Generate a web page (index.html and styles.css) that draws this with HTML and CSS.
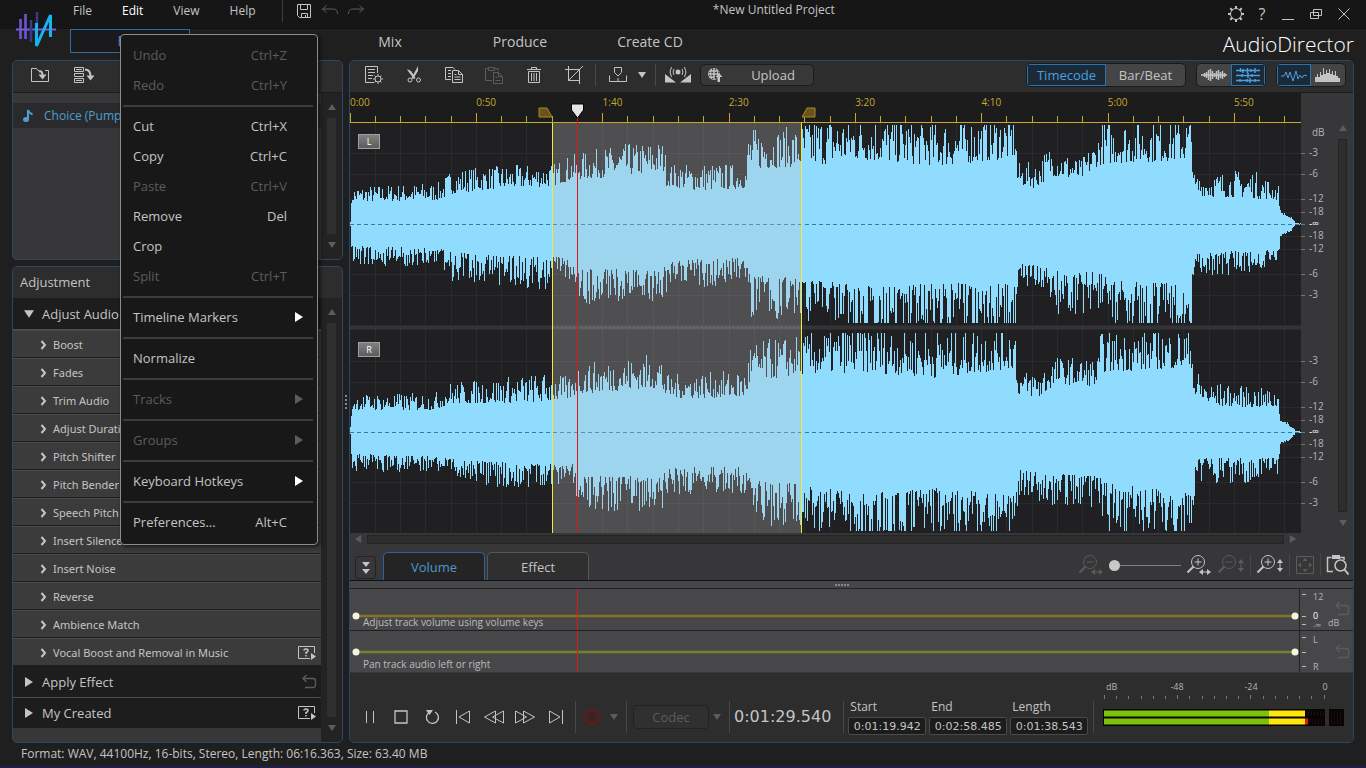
FILE: index.html
```html
<!DOCTYPE html>
<html lang="en">

<head>
    <meta charset="UTF-8">
    <meta name="viewport" content="width=device-width, initial-scale=1.0">
    <title>AudioDirector</title>
    <link rel="stylesheet" href="styles.css">
</head>

<body>
    <!-- Icon sprite -->
    <svg class="sprite" aria-hidden="true">
        <symbol id="i-save" viewBox="0 0 16 16"><path d="M1.500 1.500h13v13h-11l-2-2zM4.500 1.500v5h7v-5M5.500 14.500v-4h6v4M9.500 12v2"/></symbol>
        <symbol id="i-undo" viewBox="0 0 16 16"><path d="M4.500 2.500L.5 6l4 3.500M.5 6h11q4 0 4 5"/></symbol>
        <symbol id="i-redo" viewBox="0 0 16 16"><path d="M11.500 2.500l4 3.500-4 3.500M15.500 6h-11q-4 0-4 5"/></symbol>
        <symbol id="i-gear" viewBox="0 0 18 18"><circle cx="9" cy="9" r="5.500"/><path d="M9 1v3M9 14v3M1 9h3M14 9h3M3.300 3.300l2 2M12.700 12.700l2 2M14.700 3.300l-2 2M5.300 12.700l-2 2" stroke-width="2"/></symbol>
        <symbol id="i-min" viewBox="0 0 14 14"><path d="M1 12.500h12"/></symbol>
        <symbol id="i-restore" viewBox="0 0 14 14"><path d="M1.500 5.500h8v6h-8zM4.500 5.500v-3h8v6h-3M4.500 5.500v3h5"/></symbol>
        <symbol id="i-close" viewBox="0 0 14 14"><path d="M1.500 1.500l11 11M12.500 1.500l-11 11"/></symbol>
        <symbol id="i-import" viewBox="0 0 20 18"><path d="M9 4.500H8l-1.500-2h-5v13h17v-11H15"/><path d="M9 5.500q3.500-1 3.500 4" stroke-width="2"/><path class="solid" d="M8.500 8.500h8l-4 5z"/></symbol>
        <symbol id="i-batch" viewBox="0 0 22 18"><path d="M1.500 1.500h9v4h-9zM1.500 7.500h9v3h-9zM1.500 12.500h9v4h-9zM3 3.500h6M3 14.500h6"/><path d="M12 3.500q5.500 0 5.500 7" stroke-width="2"/><path class="solid" d="M13.500 9.500h8l-4 5z"/></symbol>
        <symbol id="i-info" viewBox="0 0 18 18"><circle cx="9" cy="9" r="7.500"/></symbol>
        <symbol id="i-note" viewBox="0 0 12 14"><path d="M6 1q1 3 4.500 4.500M6 1v9" stroke-width="2"/><ellipse class="solid" cx="4" cy="10.500" rx="3" ry="2.500"/></symbol>
        <symbol id="i-list" viewBox="0 0 20 20"><path d="M10 17.500H1.500v-16h12V8M4 4.500h7M4 7.500h7M4 10.500h5M4 13.500h4"/><circle cx="14" cy="14" r="3"/><path d="M14 9v2M14 17v2M9 14h2M17 14h2M10.500 10.500l1.400 1.400M16.100 16.100l1.400 1.400M17.500 10.500l-1.400 1.400M11.900 16.100l-1.400 1.400"/></symbol>
        <symbol id="i-cut" viewBox="0 0 18 18"><path class="solid" d="M2 3l4 2 4.500 7-1.500 1-6-8zM13 0v5l-5 8-1.500-1z"/><circle cx="5" cy="14" r="2"/><circle cx="13.500" cy="14" r="2"/></symbol>
        <symbol id="i-copy" viewBox="0 0 20 18"><path d="M7 13.500H1.500v-12H9l2 2M4 4.500h3M4 7.500h3M4 10.500h3M8.500 4.500h6l4 4v8h-10zM14.500 4.500v4h4M10.500 8.500h2M10.500 11h6M10.500 13.500h6"/></symbol>
        <symbol id="i-paste" viewBox="0 0 20 18"><path d="M8 14.500H1.500v-12h3M11 2.500h3V5M4.500 1.500h6v3h-6zM9.500 6.500h5l4 4v7h-9zM14.500 6.500v4h4M11.500 11.500h2M11.500 14.500h5"/></symbol>
        <symbol id="i-trash" viewBox="0 0 16 18"><path d="M1 3.500h14M5.500 3V1.500h5V3M2.500 5.500h11v11h-11zM5.500 7v8M8 7v8M10.500 7v8"/></symbol>
        <symbol id="i-crop" viewBox="0 0 18 18"><path d="M3.500 0v14.500H14M0 3.500h14.500V18M3.500 14.500L18 0"/></symbol>
        <symbol id="i-marker" viewBox="0 0 20 18"><path d="M6.500 1.500h7v5L10 10 6.500 6.500zM1.500 9.500v6h17v-6M10 12v3"/></symbol>
        <symbol id="i-down" viewBox="0 0 8 6"><path class="solid" d="M0 0h8L4 6z"/></symbol>
        <symbol id="i-up" viewBox="0 0 8 6"><path class="solid" d="M0 6h8L4 0z"/></symbol>
        <symbol id="i-right" viewBox="0 0 8 10"><path class="solid" d="M0 0l8 5-8 5z"/></symbol>
        <symbol id="i-left" viewBox="0 0 8 10"><path class="solid" d="M8 0L0 5l8 5z"/></symbol>
        <symbol id="i-chev" viewBox="0 0 6 10"><path d="M1 1l3.500 4L1 9" stroke-width="2"/></symbol>
        <symbol id="i-surround" viewBox="0 0 28 18"><circle class="solid" cx="14" cy="6" r="2.500"/><path d="M10 3q-2 3 0 6M18 3q2 3 0 6M7.500 1q-3 5 0 10M20.500 1q3 5 0 10"/><path class="solid" d="M1 8l11 8.500H1zM27 8l-11 8.500h11z"/></symbol>
        <symbol id="i-globe" viewBox="0 0 16 16"><path d="M7 1.500v11M1 7h11M2 4h9M2 10h5" stroke-width="1.500"/><circle cx="7" cy="7" r="5.500" stroke-dasharray="2 1"/><path d="M4.500 2q-2 5 0 10M9.500 2q1.500 3 1 5"/><path class="solid" d="M12 6l3.500 4H13v5h-2.500v-5H8.500z"/></symbol>
        <symbol id="i-wave" viewBox="0 0 26 16"><path d="M0 8h26M3.500 6v4M5.500 5v6M7.500 3v10M9.500 2v12M11.500 4v8M13.500 6v4M15.500 4v8M17.500 3v10M19.500 5v6M21.500 4v8M23.500 6v4" stroke-width="1.500"/></symbol>
        <symbol id="i-multi" viewBox="0 0 26 16"><path d="M1 3.500h24M1 8.500h24M1 13.500h24M5.500 1v4M8 2v4M12.500 1v5M16 2v3M20 1v5M7 7v3M13 6v5M17 7v3M5 12v3M12 12v3M15 11v5M20 12v3" stroke-width="1.500"/></symbol>
        <symbol id="i-line" viewBox="0 0 26 16"><path d="M0 9h3l2-4 2 6 2-6 3 9 3-10 2 8 2-4 2 3 2-3 3 1"/></symbol>
        <symbol id="i-spec" viewBox="0 0 26 16"><path class="solid" d="M0 15v-5h2v-3h1v3h2V5h1v3h2V1h1v6h2V3h1v3h2V2h1v5h2V4h1v4h2V4h1v5h2v2h2v4z"/></symbol>
        <symbol id="i-help" viewBox="0 0 20 16"><path d="M17.500 8V1.500h-16v12H13"/><path d="M7 5.500q0-1.500 2-1.500t2 1.500Q11 7 9 7.500V9M9 10v1.500" stroke-width="1.500"/><path class="solid" d="M14 8l5 3.500-5 3.500z"/></symbol>
        <symbol id="i-reset" viewBox="0 0 16 16"><path d="M5.500 1L2 4.500 5.500 8M2 4.500h10q2.500 0 2.500 2.500v4q0 2.500-2.500 2.500H4" stroke-width="1.300"/></symbol>
        <symbol id="i-zout-h" viewBox="0 0 26 22"><circle cx="12" cy="8" r="6.500"/><path d="M7.500 12.500l-6 6" stroke-width="2"/><path d="M8.500 8h7M15 18h8"/><path class="solid" d="M13 18l4-3v6zM25 18l-4-3v6z"/></symbol>
        <symbol id="i-zin-h" viewBox="0 0 26 22"><circle cx="12" cy="8" r="6.500"/><path d="M7.500 12.500l-6 6" stroke-width="2"/><path d="M8.500 8h7M12 4.500v7M15 18h8"/><path class="solid" d="M13 18l4-3v6zM25 18l-4-3v6z"/></symbol>
        <symbol id="i-zout-v" viewBox="0 0 28 22"><circle cx="12" cy="8" r="6.500"/><path d="M7.500 12.500l-6 6" stroke-width="2"/><path d="M8.500 8h7M24 9v6"/><path class="solid" d="M24 5l-3 4h6zM24 18l-3-4h6z"/></symbol>
        <symbol id="i-zin-v" viewBox="0 0 28 22"><circle cx="12" cy="8" r="6.500"/><path d="M7.500 12.500l-6 6" stroke-width="2"/><path d="M8.500 8h7M12 4.500v7M24 9v6"/><path class="solid" d="M24 5l-3 4h6zM24 18l-3-4h6z"/></symbol>
        <symbol id="i-fit" viewBox="0 0 20 20"><path d="M1.500 1.500h17v17h-17z"/><path class="solid" d="M10 3l2.500 3h-5zM10 17l2.500-3h-5zM3 10l3-2.500v5zM17 10l-3-2.500v5z"/></symbol>
        <symbol id="i-find" viewBox="0 0 24 22"><path d="M7 17.500H1.500v-14h4M14 3.500h4V6" stroke-width="1.500"/><path class="solid" d="M6 1h8v4H6z"/><circle cx="14.500" cy="11.500" r="5.500" stroke-width="1.500"/><path d="M18.500 15.500l4 5" stroke-width="2"/></symbol>
        <symbol id="i-pause" viewBox="0 0 16 16"><path d="M4.500 2v12M11.500 2v12"/></symbol>
        <symbol id="i-stop" viewBox="0 0 16 16"><path d="M2 2h12v12H2z" stroke-width="1.300"/></symbol>
        <symbol id="i-loop" viewBox="0 0 16 16"><path d="M5 3.500a6 6 0 1 0 6-.5" stroke-width="1.300"/><path class="solid" d="M2 1h7L5.500 6z"/></symbol>
        <symbol id="i-prev" viewBox="0 0 16 16"><path d="M1.500 1v14M14.500 2v12L4 8z"/></symbol>
        <symbol id="i-next" viewBox="0 0 16 16"><path d="M14.500 1v14M1.500 2v12L12 8z"/></symbol>
        <symbol id="i-rew" viewBox="0 0 22 16"><path d="M12.500 2v12L1.500 8zM20.500 2v12L9.500 8z"/></symbol>
        <symbol id="i-ff" viewBox="0 0 22 16"><path d="M9.500 2v12l11-6zM1.500 2v12l11-6z"/></symbol>
        <symbol id="i-rec" viewBox="0 0 18 18"><circle cx="9" cy="9" r="8.500" fill="#4e2222" stroke="none"/><circle cx="9" cy="9" r="5" fill="#3c2222" stroke="none"/></symbol>
        <symbol id="i-collapse" viewBox="0 0 10 14"><path class="solid" d="M1 1h8L5 6zM1 8h8l-4 5z"/></symbol>
    </svg>

    <header class="header">
        <svg class="logo" viewBox="0 0 42 38" role="img" aria-label="Logo">
            <path d="M1 18.500h40" stroke="#7a5ae0" stroke-width="2"/>
            <path d="M5.500 8v20M10.500 3v25" stroke="#7058dc" stroke-width="2.500"/>
            <path d="M16 9v22M22 1v18" stroke="#3a3b86" stroke-width="2.500"/>
            <path d="M21.500 12v23l14-31v22" fill="none" stroke="#16b4ee" stroke-width="3" stroke-linejoin="bevel"/>
        </svg>
        <div class="titlebar">
            <nav class="menubar">
                <button type="button">File</button>
                <div class="menu-open">
                    <button type="button" class="active">Edit</button>
                    <div class="dropdown">
                        <button type="button" disabled>Undo<span>Ctrl+Z</span></button>
                        <button type="button" disabled>Redo<span>Ctrl+Y</span></button>
                        <hr>
                        <button type="button">Cut<span>Ctrl+X</span></button>
                        <button type="button">Copy<span>Ctrl+C</span></button>
                        <button type="button" disabled>Paste<span>Ctrl+V</span></button>
                        <button type="button">Remove<span>Del</span></button>
                        <button type="button">Crop</button>
                        <button type="button" disabled>Split<span>Ctrl+T</span></button>
                        <hr>
                        <button type="button" class="sub">Timeline Markers<svg class="arrow-r"><use href="#i-right"/></svg></button>
                        <hr>
                        <button type="button">Normalize</button>
                        <hr>
                        <button type="button" class="sub" disabled>Tracks<svg class="arrow-r"><use href="#i-right"/></svg></button>
                        <hr>
                        <button type="button" class="sub" disabled>Groups<svg class="arrow-r"><use href="#i-right"/></svg></button>
                        <hr>
                        <button type="button" class="sub">Keyboard Hotkeys<svg class="arrow-r"><use href="#i-right"/></svg></button>
                        <hr>
                        <button type="button">Preferences...<span>Alt+C</span></button>
                    </div>
                </div>
                <button type="button">View</button>
                <button type="button">Help</button>
            </nav>
            <div class="quick">
                <button type="button" aria-label="Save"><svg width="16" height="16"><use href="#i-save"/></svg></button>
                <button type="button" aria-label="Undo" disabled><svg width="16" height="16"><use href="#i-undo"/></svg></button>
                <button type="button" aria-label="Redo" disabled><svg width="16" height="16"><use href="#i-redo"/></svg></button>
            </div>
            <div class="project">*New Untitled Project</div>
            <div class="window-buttons">
                <button type="button" aria-label="Settings"><svg width="18" height="18"><use href="#i-gear"/></svg></button>
                <button type="button" class="question">?</button>
                <button type="button" aria-label="Minimize"><svg width="14" height="14"><use href="#i-min"/></svg></button>
                <button type="button" aria-label="Restore"><svg width="14" height="14"><use href="#i-restore"/></svg></button>
                <button type="button" aria-label="Close"><svg width="14" height="14"><use href="#i-close"/></svg></button>
            </div>
        </div>
        <div class="rooms">
            <button type="button" class="room selected">Edit</button>
            <button type="button" class="room room-mix">Mix</button>
            <button type="button" class="room">Produce</button>
            <button type="button" class="room">Create CD</button>
            <div class="brand">AudioDirector</div>
        </div>
    </header>

    <main class="main">
        <aside class="side">
            <section class="panel library">
                <div class="toolbar">
                    <button type="button" aria-label="Import"><svg width="20" height="18"><use href="#i-import"/></svg></button>
                    <button type="button" aria-label="Batch import"><svg width="22" height="18"><use href="#i-batch"/></svg></button>
                    <button type="button" aria-label="Info"><svg width="18" height="18"><use href="#i-info"/></svg></button>
                </div>
                <div class="panel-body">
                    <div class="files">
                        <div class="file"><svg width="12" height="14"><use href="#i-note"/></svg>Choice (Pump</div>
                    </div>
                    <div class="vscroll">
                        <svg width="8" height="6"><use href="#i-up"/></svg>
                        <div class="track"></div>
                        <svg width="8" height="6"><use href="#i-down"/></svg>
                    </div>
                </div>
            </section>

            <section class="panel adjustment">
                <h2>Adjustment</h2>
                <div class="panel-body">
                    <div class="tree">
                        <button type="button" class="group"><svg width="10" height="8"><use href="#i-down"/></svg>Adjust Audio</button>
                        <button type="button" class="leaf"><svg class="chev"><use href="#i-chev"/></svg>Boost</button>
                        <button type="button" class="leaf"><svg class="chev"><use href="#i-chev"/></svg>Fades</button>
                        <button type="button" class="leaf"><svg class="chev"><use href="#i-chev"/></svg>Trim Audio</button>
                        <button type="button" class="leaf"><svg class="chev"><use href="#i-chev"/></svg>Adjust Duration</button>
                        <button type="button" class="leaf"><svg class="chev"><use href="#i-chev"/></svg>Pitch Shifter</button>
                        <button type="button" class="leaf"><svg class="chev"><use href="#i-chev"/></svg>Pitch Bender</button>
                        <button type="button" class="leaf"><svg class="chev"><use href="#i-chev"/></svg>Speech Pitch</button>
                        <button type="button" class="leaf"><svg class="chev"><use href="#i-chev"/></svg>Insert Silence</button>
                        <button type="button" class="leaf"><svg class="chev"><use href="#i-chev"/></svg>Insert Noise</button>
                        <button type="button" class="leaf"><svg class="chev"><use href="#i-chev"/></svg>Reverse</button>
                        <button type="button" class="leaf"><svg class="chev"><use href="#i-chev"/></svg>Ambience Match</button>
                        <button type="button" class="leaf"><svg class="chev"><use href="#i-chev"/></svg>Vocal Boost and Removal in Music<svg class="end" width="20" height="16"><use href="#i-help"/></svg></button>
                        <button type="button" class="group"><svg width="10" height="10"><use href="#i-right"/></svg>Apply Effect<svg class="end dim" width="16" height="16"><use href="#i-reset"/></svg></button>
                        <button type="button" class="group last"><svg width="10" height="10"><use href="#i-right"/></svg>My Created<svg class="end" width="20" height="16"><use href="#i-help"/></svg></button>
                    </div>
                    <div class="vscroll">
                        <svg width="8" height="6"><use href="#i-up"/></svg>
                        <div class="track"></div>
                        <svg width="8" height="6"><use href="#i-down"/></svg>
                    </div>
                </div>
            </section>
        </aside>

        <div class="splitter"><i></i><i></i><i></i><i></i></div>

        <section class="panel editor">
            <div class="toolbar">
                <button type="button" aria-label="Properties"><svg width="20" height="20"><use href="#i-list"/></svg></button>
                <button type="button" aria-label="Cut"><svg width="18" height="18"><use href="#i-cut"/></svg></button>
                <button type="button" aria-label="Copy"><svg width="20" height="18"><use href="#i-copy"/></svg></button>
                <button type="button" aria-label="Paste" disabled><svg width="20" height="18"><use href="#i-paste"/></svg></button>
                <button type="button" aria-label="Delete"><svg width="16" height="18"><use href="#i-trash"/></svg></button>
                <button type="button" aria-label="Crop"><svg width="18" height="18"><use href="#i-crop"/></svg></button>
                <span class="sep"></span>
                <button type="button" aria-label="Add marker"><svg width="20" height="18"><use href="#i-marker"/></svg></button>
                <svg class="caret" width="8" height="6"><use href="#i-down"/></svg>
                <span class="sep"></span>
                <button type="button" aria-label="Surround"><svg width="28" height="18"><use href="#i-surround"/></svg></button>
                <button type="button" class="upload"><svg width="16" height="16"><use href="#i-globe"/></svg><span>Upload</span></button>
                <div class="toggles">
                    <div class="toggle">
                        <button type="button" class="on">Timecode</button>
                        <button type="button">Bar/Beat</button>
                    </div>
                    <div class="toggle icons">
                        <button type="button" aria-label="Single"><svg width="26" height="16"><use href="#i-wave"/></svg></button>
                        <button type="button" class="on" aria-label="Multi"><svg width="26" height="16"><use href="#i-multi"/></svg></button>
                    </div>
                    <div class="toggle icons">
                        <button type="button" class="on" aria-label="Waveform"><svg width="26" height="16"><use href="#i-line"/></svg></button>
                        <button type="button" aria-label="Spectral"><svg width="26" height="16"><use href="#i-spec"/></svg></button>
                    </div>
                </div>
            </div>

            <div class="timeline">
                <div class="canvas">
                    <div class="ruler">
                        <div class="times">
                            <span>0:00</span><span>0:50</span><span>1:40</span><span>2:30</span><span>3:20</span><span>4:10</span><span>5:00</span><span>5:50</span>
                        </div>
                        <svg id="ruler" viewBox="0 0 951 30" preserveAspectRatio="none">
                            <path id="ticks" stroke="#c4a92e" fill="none"/>
                            <path d="M189 15h8l5 9h-13zM465 15h-8l-5 9h13z" fill="#6a5418" stroke="#a88628"/>
                            <path d="M221.500 11h12v6l-6 8-6-8z" fill="#e4e4e4" stroke="#000"/>
                            <rect x="227" y="25" width="1" height="5" fill="#e01818"/>
                        </svg>
                    </div>
                    <div class="waves">
                        <svg id="waves" viewBox="0 0 951 410" preserveAspectRatio="none">
                            <path id="grid" stroke="#2b2b2d" fill="none"/>
                            <path d="M0 204.500h951" stroke="#343436" stroke-width="4"/>
                            <g id="channels" fill="#8fdcff"></g>
                            <path d="M0 101.500h951M0 309.500h951" stroke="#2a7ab4" stroke-dasharray="4 3"/>
                            <rect x="202" width="249" height="410" fill="#c3c3c3" opacity=".29"/>
                            <path d="M203 204.500h248" stroke="#8a8a8a" stroke-width="2" stroke-dasharray="1 3" opacity=".5"/>
                            <rect x="202" width="1" height="410" fill="#f0ea40"/>
                            <rect x="451" width="1" height="410" fill="#f0ea40"/>
                            <rect x="227" width="1" height="410" fill="#e01818"/>
                        </svg>
                        <span class="channel channel-l">L</span>
                        <span class="channel channel-r">R</span>
                    </div>
                </div>
                <svg class="db-scale" id="db-scale" width="36" height="440"></svg>
                <div class="vscroll plain">
                    <svg width="8" height="6"><use href="#i-up"/></svg>
                    <div class="track"></div>
                    <svg width="8" height="6"><use href="#i-down"/></svg>
                </div>
            </div>

            <div class="hscroll">
                <svg width="8" height="8"><use href="#i-left"/></svg>
                <div class="track"></div>
                <svg width="8" height="8"><use href="#i-right"/></svg>
            </div>

            <div class="lane-tabs">
                <button type="button" class="collapse" aria-label="Collapse"><svg width="10" height="14"><use href="#i-collapse"/></svg></button>
                <button type="button" class="lane-tab on">Volume</button>
                <button type="button" class="lane-tab">Effect</button>
                <div class="zoom">
                    <button type="button" aria-label="Zoom out" disabled><svg width="26" height="22"><use href="#i-zout-h"/></svg></button>
                    <input type="range" min="0" max="100" value="0" aria-label="Zoom">
                    <button type="button" aria-label="Zoom in"><svg width="26" height="22"><use href="#i-zin-h"/></svg></button>
                    <button type="button" aria-label="Zoom out vertically" disabled><svg width="28" height="22"><use href="#i-zout-v"/></svg></button>
                    <span class="sep"></span>
                    <button type="button" aria-label="Zoom in vertically"><svg width="28" height="22"><use href="#i-zin-v"/></svg></button>
                    <span class="sep"></span>
                    <button type="button" aria-label="Fit" disabled><svg width="20" height="20"><use href="#i-fit"/></svg></button>
                    <span class="sep"></span>
                    <button type="button" aria-label="Zoom to selection"><svg width="24" height="22"><use href="#i-find"/></svg></button>
                </div>
            </div>

            <div class="lanes">
                <div class="grip"><i></i><i></i><i></i><i></i><i></i></div>
                <div class="lane">
                    <div class="lane-view">
                        <svg viewBox="0 0 951 41" preserveAspectRatio="none">
                            <path d="M6 27h939" stroke="#6a5c28" stroke-width="3"/>
                            <path d="M6 27h939" stroke="#9a8c34"/>
                            <rect x="227" width="1" height="41" fill="#e01818"/>
                            <rect x="949" width="1" height="41" fill="#222"/>
                            <g fill="#f4f4dc"><circle cx="6" cy="27" r="3.500"/><circle cx="945" cy="27" r="3.500"/></g>
                        </svg>
                        <span>Adjust track volume using volume keys</span>
                    </div>
                    <svg class="lane-scale" width="52" height="41">
                        <path d="M1 5.500h4M1 27.500h4M1 35.500h4" stroke="#bbb"/>
                        <text x="12" y="11">12</text>
                        <text x="12" y="30" class="strong">0</text>
                        <text x="12" y="39" class="tiny">-∞</text>
                        <text x="27" y="37">dB</text>
                        <use href="#i-reset" x="33" y="12" width="16" height="16" class="dim"/>
                    </svg>
                </div>
                <div class="lane">
                    <div class="lane-view">
                        <svg viewBox="0 0 951 41" preserveAspectRatio="none">
                            <path d="M6 21h939" stroke="#5e6c2c" stroke-width="3"/>
                            <path d="M6 21h939" stroke="#86963a"/>
                            <rect x="227" width="1" height="41" fill="#e01818"/>
                            <rect x="949" width="1" height="41" fill="#222"/>
                            <g fill="#f4f4dc"><circle cx="6" cy="21" r="3.500"/><circle cx="945" cy="21" r="3.500"/></g>
                        </svg>
                        <span>Pan track audio left or right</span>
                    </div>
                    <svg class="lane-scale" width="52" height="41">
                        <path d="M1 6.500h4M1 21.500h4M1 35.500h4" stroke="#bbb"/>
                        <text x="12" y="12">L</text>
                        <text x="12" y="39">R</text>
                        <use href="#i-reset" x="33" y="13" width="16" height="16" class="dim"/>
                    </svg>
                </div>
            </div>

            <div class="transport">
                <div class="play">
                    <button type="button" aria-label="Pause"><svg width="16" height="16"><use href="#i-pause"/></svg></button>
                    <button type="button" aria-label="Stop"><svg width="16" height="16"><use href="#i-stop"/></svg></button>
                    <button type="button" aria-label="Loop"><svg width="16" height="16"><use href="#i-loop"/></svg></button>
                    <button type="button" aria-label="Previous"><svg width="16" height="16"><use href="#i-prev"/></svg></button>
                    <button type="button" aria-label="Rewind"><svg width="22" height="16"><use href="#i-rew"/></svg></button>
                    <button type="button" aria-label="Forward"><svg width="22" height="16"><use href="#i-ff"/></svg></button>
                    <button type="button" aria-label="Next"><svg width="16" height="16"><use href="#i-next"/></svg></button>
                    <span class="sep"></span>
                    <button type="button" aria-label="Record" disabled><svg width="18" height="18"><use href="#i-rec"/></svg></button>
                    <svg class="caret dim" width="8" height="6"><use href="#i-down"/></svg>
                    <span class="sep"></span>
                    <button type="button" class="codec" disabled>Codec</button>
                    <svg class="caret dim" width="8" height="6"><use href="#i-down"/></svg>
                    <span class="sep"></span>
                    <output class="clock">0:01:29.540</output>
                    <span class="sep"></span>
                    <div class="fields">
                        <label>Start<input type="text" value="0:01:19.942"></label>
                        <label>End<input type="text" value="0:02:58.485"></label>
                        <label>Length<input type="text" value="0:01:38.543"></label>
                    </div>
                    <span class="sep"></span>
                </div>
                <svg class="meter" id="meter" width="250" height="52">
                    <text x="4" y="12">dB</text>
                    <text x="75" y="12" text-anchor="middle">-48</text>
                    <text x="149" y="12" text-anchor="middle">-24</text>
                    <text x="223" y="12" text-anchor="middle">0</text>
                    <path id="meter-ticks" stroke="#777" fill="none"/>
                    <rect x="1" y="31" width="222" height="17" fill="#080404"/>
                    <path d="M2 35.500h165M2 43.500h165" stroke="#7cc30c" stroke-width="6"/>
                    <path d="M167 35.500h36M167 43.500h36" stroke="#ffe60a" stroke-width="6"/>
                    <path d="M203 43.500h3" stroke="#e01818" stroke-width="6"/>
                    <path d="M206 35.500h16M207 43.500h15" stroke="#1c0c0a" stroke-width="5" stroke-dasharray="1 2"/>
                    <rect x="227" y="31" width="15" height="17" fill="#080404"/>
                    <path d="M229 39.500h11" stroke="#1c0c0a" stroke-width="13" stroke-dasharray="1 2"/>
                </svg>
            </div>
        </section>
    </main>

    <footer class="status">Format: WAV, 44100Hz, 16-bits, Stereo, Length: 06:16.363, Size: 63.40 MB</footer>

    <script src="script.js"></script>
</body>

</html>
```

FILE: styles.css
```css
* {
    margin: 0;
    padding: 0;
    box-sizing: border-box;
}

body {
    display: flex;
    flex-direction: column;
    min-height: 100vh;
    font-family: "Open Sans", "Noto Sans", sans-serif;
    font-size: 12px;
    line-height: 16px;
    color: #c4c4c4;
    background-color: #1f1f1f;
}

button {
    display: flex;
    align-items: center;
    justify-content: center;
    border: none;
    background: none;
    color: inherit;
    font: inherit;
}

svg {
    flex: none;
    fill: none;
    stroke: currentColor;
}

svg text {
    fill: #b4b4b4;
    stroke: none;
    font-size: 10px;
}

svg rect,
svg g circle {
    stroke: none;
}

.solid {
    fill: currentColor;
    stroke: none;
}

.sprite {
    display: none;
}

.dim,
button:disabled {
    color: #5c5c5c;
}

.sep {
    flex: none;
    width: 1px;
    height: 22px;
    background-color: #484848;
}

/* Header */
.header {
    display: grid;
    grid-template-columns: 62px 1fr;
    grid-template-rows: 29px 31px;
    background: linear-gradient(#161616 29px, #1f1f1f 29px);
}

.logo {
    grid-row: 1 / 3;
    align-self: center;
    justify-self: end;
    width: 42px;
    height: 38px;
    margin-right: 5px;
}

.titlebar,
.rooms,
.menubar,
.quick,
.window-buttons {
    display: flex;
}

.titlebar {
    border-bottom: 1px solid #101010;
}

.menubar > button,
.menu-open > button {
    height: 22px;
}

.menubar {
    gap: 30px;
    padding-left: 11px;
}

.menubar .active {
    color: #fff;
}

.menu-open {
    position: relative;
}

.dropdown {
    position: absolute;
    z-index: 10;
    top: 34px;
    left: -2px;
    width: 198px;
    padding: 6px 0;
    background-color: #181818;
    border: 1px solid #8c8c8c;
    border-radius: 4px;
    box-shadow: 2px 2px 4px rgba(0, 0, 0, 0.6);
    font-size: 13px;
}

.dropdown button {
    justify-content: space-between;
    width: 100%;
    height: 30px;
    padding: 0 30px 2px 12px;
}

.dropdown .sub {
    padding-right: 14px;
}

.dropdown hr {
    height: 2px;
    margin: 4px 4px 5px 2px;
    border: none;
    background-color: #3c3c3c;
}

.arrow-r {
    width: 8px;
    height: 10px;
}

.dropdown .sub:enabled .arrow-r {
    color: #fff;
}

.quick {
    align-items: center;
    gap: 10px;
    height: 22px;
    margin-left: 26px;
    padding-left: 13px;
    border-left: 1px solid #3c3c3c;
}

.project {
    flex: 1;
    height: 20px;
    line-height: 20px;
    padding-right: 38px;
    text-align: center;
}

.window-buttons {
    height: 28px;
    padding-right: 8px;
}

.window-buttons button {
    width: 28px;
}

.window-buttons .question {
    width: 24px;
    font-size: 16px;
}

.rooms {
    gap: 10px;
    padding: 0 12px 0 8px;
    font-size: 14px;
}

.room {
    width: 120px;
    height: 26px;
}

.room.selected {
    height: 24px;
    background-color: #1a1a1c;
    border: 1px solid #2c6ea6;
    color: #4a94cc;
}

/* leaves room for the tab under the open menu */
.room-mix {
    margin-left: 130px;
}

.brand {
    margin-left: auto;
    font-size: 21px;
    font-weight: 300;
    line-height: 30px;
    color: #fff;
}

/* Panels */
.main {
    flex: 1;
    display: flex;
    padding: 0 12px;
}

.side {
    display: flex;
    flex-direction: column;
    gap: 6px;
    width: 331px;
}

.splitter {
    display: flex;
    flex-direction: column;
    align-items: center;
    justify-content: center;
    gap: 2px;
    width: 6px;
}

.splitter i,
.grip i {
    width: 2px;
    height: 2px;
    background-color: #888;
}

.panel {
    display: flex;
    flex-direction: column;
    border: 1px solid #2a4668;
    border-radius: 5px;
    background-color: #373739;
    overflow: hidden;
}

.toolbar {
    display: flex;
    align-items: center;
    height: 32px;
    padding-bottom: 3px;
    background-color: #2d2d2d;
    border-bottom: 1px solid #1c1c1c;
}

.panel-body {
    flex: 1;
    display: flex;
}

.vscroll {
    display: flex;
    flex-direction: column;
    align-items: center;
    gap: 8px;
    width: 21px;
    padding: 11px 0;
    background-color: #232323;
    color: #5c5c5c;
}

.vscroll .track {
    flex: 1;
    width: 9px;
    background-color: #2f2f2f;
}

.library {
    height: 200px;
}

.library .toolbar {
    padding-left: 5px;
}

.library .toolbar button {
    width: 44px;
}

.files {
    flex: 1;
    padding-top: 10px;
}

.file {
    display: flex;
    align-items: center;
    gap: 10px;
    height: 25px;
    padding-left: 9px;
    background-color: #2a2a2c;
    color: #4f9fd0;
}

.adjustment {
    flex: 1;
}

.adjustment h2 {
    height: 31px;
    padding-left: 7px;
    background-color: #2d2d2d;
    font-size: 13px;
    font-weight: normal;
    line-height: 31px;
}

.tree {
    flex: 1;
}

.group,
.leaf {
    justify-content: flex-start;
    width: 100%;
}

.group {
    gap: 8px;
    height: 32px;
    padding: 0 4px 0 11px;
    background-color: #1d1d1d;
    border-bottom: 1px solid #4c4c4c;
    font-size: 13px;
}

.group.last {
    height: 30px;
    border-bottom: none;
}

.leaf {
    gap: 6px;
    height: 28px;
    padding: 1px 4px 0 27px;
    background-color: #3b3b3b;
    border-top: 1px solid #4a4a4a;
    border-bottom: 1px solid #1e1e1e;
    font-family: "Noto Sans", sans-serif;
    font-size: 11px;
}

.chev {
    width: 7px;
    height: 10px;
}

.end {
    margin-left: auto;
}

/* Editor */
.editor {
    flex: 1;
    min-width: 0;
}

.editor > .toolbar {
    padding: 0 7px 3px 4px;
    font-size: 13px;
}

.editor > .toolbar > button {
    width: 40px;
}

.editor > .toolbar .sep {
    margin: 0 2px 0 1px;
}

.caret {
    margin: 0 8px 0 0;
}

.editor > .toolbar .upload {
    width: 114px;
    height: 22px;
    margin-left: 2px;
    padding-left: 6px;
    border: 1px solid #1c1c1c;
    border-radius: 5px;
    background-color: #383838;
}

.upload span {
    flex: 1;
    padding-left: 10px;
}

.toggles {
    display: flex;
    gap: 10px;
    margin-left: auto;
}

.toggle {
    display: flex;
    border: 1px solid #1a1a1a;
    border-radius: 5px;
    background-color: #454545;
    overflow: hidden;
}

.toggle button {
    width: 79px;
    height: 22px;
    border: 1px solid transparent;
}

.toggle.icons button {
    width: 34px;
}

.toggle .on {
    border-color: #2c74b0;
    background-color: #1c2a38;
    color: #4aa0dc;
}

.timeline {
    display: flex;
}

.canvas {
    flex: 1;
    min-width: 0;
    background-color: #202022;
}

.ruler,
.lane-view {
    display: grid;
}

.ruler > *,
.lane-view > * {
    grid-area: 1 / 1;
}

.ruler {
    height: 30px;
    background-color: #1c1c1c;
    overflow: hidden;
}

.ruler svg,
.waves > svg,
.lane-view svg {
    width: 100%;
    height: 100%;
    min-width: 0;
}

.times {
    display: flex;
    color: #c4a92e;
    font-size: 10px;
    line-height: 18px;
}

.times span {
    flex: 0 0 13.28%;
}

.waves {
    position: relative;
    height: 410px;
}

.channel {
    position: absolute;
    left: 8px;
    width: 22px;
    height: 15px;
    border: 1px solid #a0a0a0;
    background: linear-gradient(#808080, #5c5c5c);
    color: #fff;
    font-size: 9px;
    line-height: 13px;
    text-align: center;
}

.channel-l {
    top: 11px;
}

.channel-r {
    top: 219px;
}

.plain {
    width: 16px;
    padding: 32px 5px 7px 0;
    background: none;
}

.plain .track,
.hscroll .track {
    border: 1px solid #242424;
    background-color: #2d2d2d;
}

.hscroll {
    display: flex;
    align-items: center;
    gap: 5px;
    height: 12px;
    padding: 0 56px 0 4px;
    color: #5c5c5c;
}

.hscroll .track {
    flex: 1;
    height: 9px;
}

.lane-tabs {
    display: flex;
    align-items: flex-end;
    height: 35px;
    padding: 0 3px 0 5px;
}

.collapse {
    width: 21px;
    height: 23px;
    margin: 0 7px 1px 0;
    border: 1px solid #242424;
    border-radius: 3px;
}

.lane-tab {
    width: 102px;
    height: 28px;
    margin-right: 2px;
    border: 1px solid #565656;
    border-bottom: none;
    border-radius: 5px 5px 0 0;
    background-color: #2f2f2f;
    font-size: 13px;
}

.lane-tab.on {
    border-color: #2a64a0;
    background-color: #242424;
    color: #4f96cc;
}

.zoom {
    display: flex;
    align-items: center;
    gap: 5px;
    height: 30px;
    margin-left: auto;
}

.zoom input {
    appearance: none;
    width: 72px;
    height: 12px;
    background: linear-gradient(#808080, #808080) center / 100% 1px no-repeat;
}

.zoom input::-webkit-slider-thumb {
    appearance: none;
    width: 11px;
    height: 11px;
    border-radius: 50%;
    background-color: #c8c8c8;
}

.lanes {
    border-top: 1px solid #06101e;
    background-color: #474749;
}

.grip {
    display: flex;
    align-items: center;
    justify-content: center;
    gap: 1px;
    height: 7px;
    padding-right: 20px;
}

.lane {
    display: flex;
    height: 42px;
    border-top: 1px solid #222;
}

.lane-view {
    flex: 1;
    min-width: 0;
    grid-template-rows: 41px;
}

.lane-view span {
    align-self: end;
    padding-left: 13px;
    color: #bcbcbc;
    font-size: 10px;
    line-height: 16px;
}

.lane-scale text {
    font-size: 9px;
}

.lane-scale .tiny {
    font-size: 8px;
}

svg .strong {
    fill: #fff;
}

/* Transport */
.transport {
    flex: 1;
    display: flex;
    justify-content: space-between;
    background-color: #2d2d2d;
    border-top: 1px solid #383838;
}

.play {
    display: flex;
    align-items: center;
    height: 32px;
    margin-top: 28px;
    padding-left: 4px;
}

.play button {
    width: 31px;
}

.play > .sep {
    height: 32px;
    margin-left: 4px;
}

.play .codec {
    width: 76px;
    height: 24px;
    margin: 0 1px 0 6px;
    border: 1px solid #222;
    border-radius: 4px;
    background-color: #303030;
    font-size: 13px;
}

.play .caret {
    margin: 0 4px 0 3px;
}

.clock {
    padding: 0 8px 0 4px;
    font-family: "DejaVu Sans", sans-serif;
    font-size: 16px;
    line-height: 20px;
}

.fields {
    display: flex;
    gap: 3px;
    padding: 0 1px 0 4px;
}

.fields label {
    display: flex;
    flex-direction: column;
    gap: 2px;
    width: 78px;
    text-indent: 2px;
}

.fields input {
    width: 100%;
    height: 18px;
    border: 1px solid #4a4a4a;
    border-radius: 2px;
    background-color: #1c1c1c;
    color: #c4c4c4;
    font-family: "DejaVu Sans", sans-serif;
    font-size: 11px;
    text-align: center;
    text-indent: 0;
}

.meter {
    margin-top: 5px;
    margin-right: 1px;
}

.meter text {
    font-size: 9px;
}

.status {
    height: 25px;
    padding-left: 21px;
    border-bottom: 2px solid #1f1f48;
    line-height: 22px;
}
```

FILE: script.js
```js
/*
    Envelope of each half channel: [x, lowest level, highest level]
*/
var envelopes = {
    leftTop: [[0, 2, 6], [2, 22, 38], [90, 24, 42], [100, 30, 55], [130, 34, 58], [200, 38, 60], [222, 44, 70], [270, 48, 80], [314, 52, 84], [316, 38, 60], [350, 33, 62], [396, 36, 60], [398, 54, 96], [451, 58, 98], [453, 58, 108], [510, 64, 112], [590, 58, 105], [665, 66, 112], [667, 40, 62], [685, 36, 62], [700, 48, 80], [730, 44, 64], [745, 56, 84], [752, 60, 104], [841, 64, 110], [844, 28, 50], [900, 26, 56], [926, 24, 42], [928, 24, 40], [930, 11, 14], [940, 5, 8], [945, 1, 2], [951, 0, 1]],
    leftBottom: [[0, 2, 6], [2, 22, 42], [90, 24, 44], [95, 28, 58], [200, 34, 66], [204, 32, 46], [220, 36, 58], [230, 44, 82], [310, 44, 78], [320, 36, 64], [394, 34, 62], [400, 50, 94], [451, 54, 100], [510, 62, 116], [665, 58, 116], [668, 40, 68], [698, 42, 66], [705, 46, 92], [750, 48, 90], [765, 56, 112], [841, 60, 114], [844, 30, 52], [900, 26, 52], [928, 26, 38], [930, 10, 13], [940, 6, 8], [945, 1, 2], [951, 0, 1]],
    rightTop: [[0, 2, 6], [2, 22, 38], [85, 22, 40], [100, 28, 50], [200, 30, 60], [222, 34, 54], [226, 38, 68], [310, 44, 80], [316, 34, 58], [395, 34, 62], [400, 50, 90], [451, 58, 98], [510, 60, 110], [590, 54, 105], [665, 64, 108], [667, 38, 60], [690, 34, 64], [705, 48, 76], [747, 46, 74], [750, 60, 100], [841, 64, 104], [844, 32, 64], [860, 26, 50], [928, 24, 42], [930, 11, 14], [940, 5, 8], [945, 1, 2], [951, 0, 1]],
    rightBottom: [[0, 2, 6], [2, 22, 40], [90, 24, 40], [110, 28, 54], [200, 32, 58], [222, 32, 50], [230, 44, 80], [310, 44, 80], [320, 36, 62], [395, 34, 62], [400, 48, 94], [451, 52, 98], [510, 62, 116], [590, 56, 110], [665, 64, 116], [668, 38, 66], [690, 40, 72], [745, 44, 82], [760, 50, 104], [841, 62, 112], [846, 26, 52], [900, 26, 52], [928, 26, 42], [930, 10, 13], [940, 6, 8], [945, 1, 2], [951, 0, 1]]
};

var WIDTH = 951;
var SECOND = WIDTH / 376.363;
var seed = 7;

function random() {
    seed = (seed * 16807) % 2147483647;
    return seed / 2147483647;
}

function levelAt(points, x) {
    var i = 1;
    while (i < points.length - 1 && points[i][0] < x) {
        i++;
    }
    var a = points[i - 1];
    var b = points[i];
    var t = (x - a[0]) / (b[0] - a[0]);
    var low = a[1] + (b[1] - a[1]) * t;
    var high = a[2] + (b[2] - a[2]) * t;
    return Math.min(99, Math.round(low + (high - low) * Math.pow(random(), 1.5)));
}

/*
    One filled shape per channel, a 1px column for each position
*/
function drawChannel(center, top, bottom) {
    var d = 'M0 ' + center;
    for (var x = 0; x < WIDTH; x++) {
        d += 'V' + (center - levelAt(top, x)) + 'h1';
    }
    for (x = WIDTH - 1; x >= 0; x--) {
        d += 'V' + (center + levelAt(bottom, x)) + 'h-1';
    }
    return '<path stroke="none" d="' + d + 'z"/>';
}

document.querySelector('#channels').innerHTML =
    drawChannel(101, envelopes.leftTop, envelopes.leftBottom) +
    drawChannel(309, envelopes.rightTop, envelopes.rightBottom);

/*
    Ruler ticks and grid
*/
var ticks = 'M0 29.5h' + WIDTH;
var grid = '';
for (var s = 0; s < 376; s += 10) {
    var x = Math.floor(s * SECOND) + 0.5;
    ticks += 'M' + x + ' ' + (s % 50 ? '23v6' : '20v9');
    if (s) {
        grid += 'M' + x + ' 0v410';
    }
}
document.querySelector('#ticks').setAttribute('d', ticks);

/*
    dB scale beside both channels
*/
var marks = [[-71, '-3'], [-50, '-6'], [-25, '-12'], [-12, '-18'], [0, '-∞'], [12, '-18'], [25, '-12'], [50, '-6'], [71, '-3']];
var scale = '<text x="11" y="43">dB</text>';
[101, 309].forEach(function (center) {
    marks.forEach(function (mark) {
        var y = center + mark[0];
        grid += 'M0 ' + (y + 0.5) + 'h' + WIDTH;
        scale += '<path d="M0 ' + (y + 30.5) + 'h4" stroke="#777"/>';
        scale += '<text x="8" y="' + (y + 33) + '"' + (mark[0] ? '' : ' class="strong"') + '>' + mark[1] + '</text>';
    });
});
document.querySelector('#grid').setAttribute('d', grid);
document.querySelector('#db-scale').innerHTML = scale;

var meterTicks = '';
for (var i = 0; i <= 18; i++) {
    meterTicks += 'M' + (Math.round(i * 12.2) + 2.5) + ' ' + (i % 6 ? '18v3' : '17v4');
}
document.querySelector('#meter-ticks').setAttribute('d', meterTicks);
```
